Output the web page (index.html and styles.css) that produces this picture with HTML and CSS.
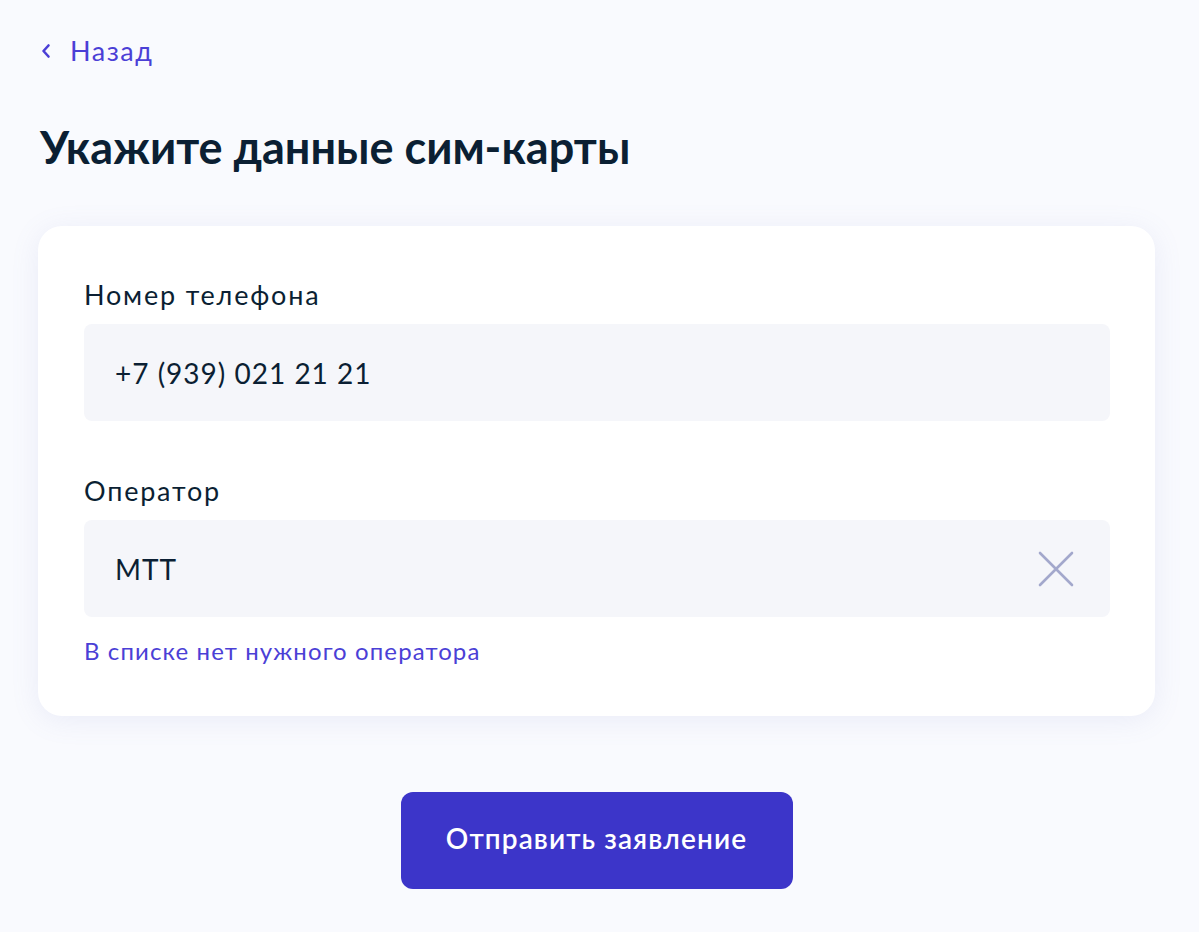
FILE: index.html
```
<!DOCTYPE html>
<html lang="ru">
<head>
<meta charset="utf-8">
<title>Укажите данные сим-карты</title>
<link rel="stylesheet" href="styles.css">
</head>
<body>
<main class="page">
  <a class="back" href="#">
    <svg class="back-icon" width="12" height="16" viewBox="0 0 12 16"><path d="M8.5 2.5 L3.5 8 L8.5 13.5" fill="none" stroke="#4b3fd6" stroke-width="2.6" stroke-linecap="round" stroke-linejoin="round"/></svg>
    <span>Назад</span>
  </a>
  <h1 class="title">Укажите данные сим-карты</h1>
  <section class="card">
    <div class="field">
      <div class="label">Номер телефона</div>
      <div class="input">+7 (939) 021 21 21</div>
    </div>
    <div class="field field-op">
      <div class="label">Оператор</div>
      <div class="input">
        <span>МТТ</span>
        <svg class="clear" width="36" height="36" viewBox="0 0 36 36"><path d="M2 2 L34 34 M34 2 L2 34" stroke="#a3a8cc" stroke-width="2.6" stroke-linecap="round"/></svg>
      </div>
      <a class="hint" href="#">В списке нет нужного оператора</a>
    </div>
  </section>
  <div class="actions">
    <button class="submit" type="button">Отправить заявление</button>
  </div>
</main>
</body>
</html>
```
FILE: styles.css
```
html, body {
  margin: 0;
  padding: 0;
  background: #f9fafe;
}
body {
  font-family: Lato, "Open Sans", sans-serif;
  color: #0b1f33;
  width: 1199px;
  height: 932px;
  overflow: hidden;
}
.page {
  padding: 34px 44px 0 38px;
}
.back {
  display: flex;
  align-items: center;
  gap: 18px;
  margin-left: 2px;
  color: #4b3fd6;
  text-decoration: none;
  font-size: 27px;
  letter-spacing: 1.5px;
  line-height: 34px;
}
.back-icon {
  display: block;
}
.title {
  margin: 52px 0 0 2px;
  font-size: 45px;
  font-weight: 700;
  line-height: 54px;
  color: #0b1f33;
}
.card {
  margin-top: 52px;
  background: #ffffff;
  border-radius: 24px;
  padding: 53px 45px 51px 46px;
  box-shadow: 0 4px 28px rgba(120, 130, 200, 0.12);
}
.label {
  font-size: 27px;
  letter-spacing: 1.8px;
  line-height: 32px;
  color: #0b1f33;
}
.input {
  margin-top: 13px;
  height: 97px;
  background: #f5f6fa;
  border-radius: 8px;
  display: flex;
  align-items: center;
  justify-content: space-between;
  padding: 0 36px 0 31px;
  font-size: 28px;
  letter-spacing: 1px;
  color: #0b1f33;
}
.clear {
  display: block;
}
.field-op {
  margin-top: 54px;
}
.hint {
  display: block;
  margin-top: 20px;
  font-size: 24px;
  letter-spacing: 1.1px;
  line-height: 28px;
  color: #4b3fd6;
  text-decoration: none;
}
.actions {
  display: flex;
  justify-content: center;
  margin-top: 76px;
}
.submit {
  width: 392px;
  height: 97px;
  padding: 0 0 5px;
  border: 0;
  border-radius: 12px;
  background: #3c35c9;
  color: #ffffff;
  font-family: Lato, "Open Sans", sans-serif;
  font-size: 28px;
  letter-spacing: 1.1px;
  font-weight: 600;
}
```
